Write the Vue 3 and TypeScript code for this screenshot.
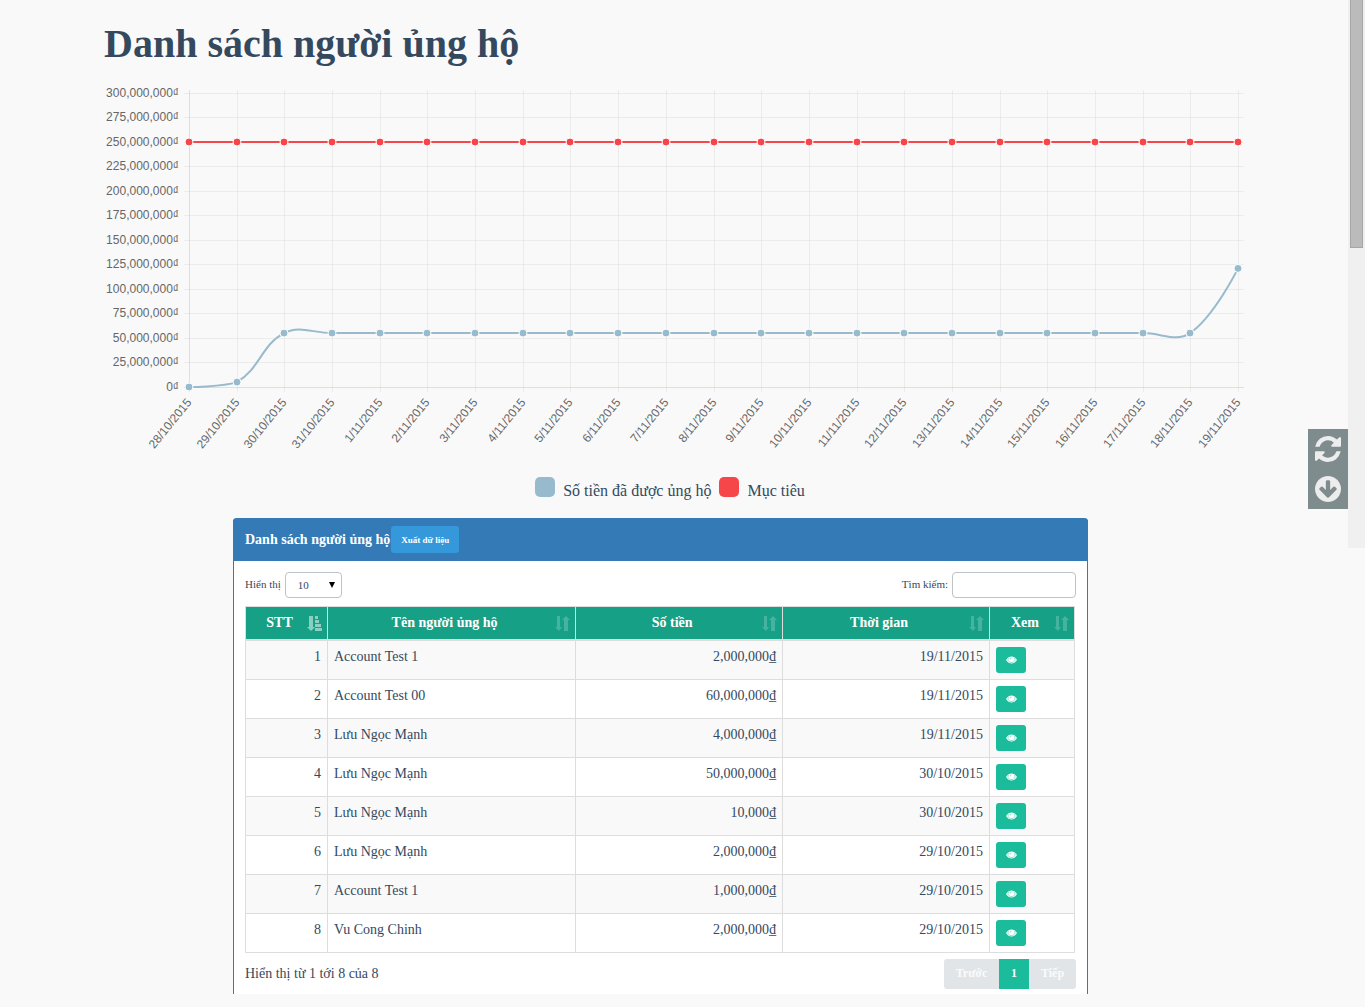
<script setup lang="ts">
import { ref } from 'vue'

interface Point { x: number; y: number }
interface Donor { name: string; amount: string; date: string }

const labels: string[] = [
  '28/10/2015', '29/10/2015', '30/10/2015', '31/10/2015',
  ...Array.from({ length: 19 }, (_, i) => `${i + 1}/11/2015`),
]

// Plot area inside the 1140 x 380 drawing
const left = 85
const right = 1134
const top = 5
const bottom = 299
const maxValue = 300

const xAt = (i: number): number => Math.round(left + (i * (right - left)) / (labels.length - 1))
const yAt = (millions: number): number => bottom - (millions * (bottom - top)) / maxValue

const ticks = Array.from({ length: 13 }, (_, i) => {
  const value = i * 25
  return { y: Math.round(yAt(value) - 0.1), text: value === 0 ? '0₫' : `${value},000,000₫` }
})

const raised: number[] = [0, 5, ...Array(20).fill(55), 121]
const raisedPoints: Point[] = raised.map((v, i) => ({ x: xAt(i), y: yAt(v) }))
const goalPoints: Point[] = labels.map((_, i) => ({ x: xAt(i), y: yAt(250) }))

// Smooth curve: every inner point gets a pair of handles kept inside the plot, the two ends get none
function curve(points: Point[], tension = 0.4): string {
  const inside = (y: number): number => Math.min(bottom, Math.max(top, y))
  const handles = points.map((p, i) => {
    const prev = points[i - 1]
    const next = points[i + 1]
    if (!prev || !next) return { before: p, after: p }
    const d1 = Math.hypot(p.x - prev.x, p.y - prev.y)
    const d2 = Math.hypot(next.x - p.x, next.y - p.y)
    const a = (tension * d1) / (d1 + d2)
    const b = (tension * d2) / (d1 + d2)
    return {
      before: { x: p.x - a * (next.x - prev.x), y: inside(p.y - a * (next.y - prev.y)) },
      after: { x: p.x + b * (next.x - prev.x), y: inside(p.y + b * (next.y - prev.y)) },
    }
  })
  return points
    .map((p, i) => {
      if (i === 0) return `M${p.x} ${p.y}`
      const c1 = handles[i - 1].after
      const c2 = handles[i].before
      return `C${c1.x} ${c1.y} ${c2.x} ${c2.y} ${p.x} ${p.y}`
    })
    .join('')
}

const series = [
  { name: 'Số tiền đã được ủng hộ', color: '#97bbcd', points: raisedPoints },
  { name: 'Mục tiêu', color: '#f7464a', points: goalPoints },
]

const columns = ['STT', 'Tên người ủng hộ', 'Số tiền', 'Thời gian', 'Xem']
const donors: Donor[] = [
  { name: 'Account Test 1', amount: '2,000,000₫', date: '19/11/2015' },
  { name: 'Account Test 00', amount: '60,000,000₫', date: '19/11/2015' },
  { name: 'Lưu Ngọc Mạnh', amount: '4,000,000₫', date: '19/11/2015' },
  { name: 'Lưu Ngọc Mạnh', amount: '50,000,000₫', date: '30/10/2015' },
  { name: 'Lưu Ngọc Mạnh', amount: '10,000₫', date: '30/10/2015' },
  { name: 'Lưu Ngọc Mạnh', amount: '2,000,000₫', date: '29/10/2015' },
  { name: 'Account Test 1', amount: '1,000,000₫', date: '29/10/2015' },
  { name: 'Vu Cong Chinh', amount: '2,000,000₫', date: '29/10/2015' },
]
const pageSize = ref('10')
const search = ref('')
</script>

<template>
  <div class="page">
    <main class="container">
      <h1>Danh sách người ủng hộ</h1>

      <svg class="chart" viewBox="0 0 1140 380" role="img" aria-label="Số tiền đã được ủng hộ">
        <g class="grid">
          <path v-for="(t, i) in ticks" :key="t.text" :class="{ axis: i === 0 }" :d="`M80 ${t.y + 0.5}H1140`" />
          <path v-for="(l, i) in labels" :key="l" :class="{ axis: i === 0 }" :d="`M${xAt(i) + 0.5} 2V304`" />
        </g>
        <g class="labels">
          <text v-for="t in ticks" :key="t.text" x="75" :y="t.y + 4">{{ t.text }}</text>
          <text v-for="(l, i) in labels" :key="l" y="4" :transform="`translate(${xAt(i)} 312) rotate(-51)`">{{ l }}</text>
        </g>
        <g v-for="s in series" :key="s.name">
          <path :d="curve(s.points)" fill="none" :stroke="s.color" stroke-width="2" />
          <circle v-for="p in s.points" :key="p.x" :cx="p.x" :cy="p.y" r="4" :fill="s.color" stroke="#fff" />
        </g>
      </svg>

      <ul class="legend">
        <li v-for="s in series" :key="s.name">
          <span class="swatch" :style="{ background: s.color }"></span>{{ s.name }}
        </li>
      </ul>

      <section class="panel">
        <header class="panel-head">
          <h2>Danh sách người ủng hộ</h2>
          <button type="button" class="export">Xuất dữ liệu</button>
        </header>
        <div class="panel-body">
          <div class="tools">
            <div class="field">
              <label for="size">Hiển thị</label>
              <span class="select">
                <select id="size" v-model="pageSize">
                  <option>10</option>
                  <option>25</option>
                  <option>50</option>
                </select>
                <svg viewBox="0 0 6 6" aria-hidden="true"><path d="M0 0h6L3 6z" /></svg>
              </span>
            </div>
            <div class="field">
              <label for="search">Tìm kiếm:</label>
              <input id="search" v-model="search" type="search" />
            </div>
          </div>

          <table>
            <colgroup>
              <col class="c-no" /><col class="c-name" /><col class="c-sum" /><col class="c-date" /><col class="c-view" />
            </colgroup>
            <thead>
              <tr>
                <th v-for="(c, i) in columns" :key="c" scope="col">
                  <div class="th">
                    <span>{{ c }}</span>
                    <svg v-if="i === 0" class="sort on" viewBox="0 0 15 15" aria-hidden="true">
                      <path d="M2 0h4v11h2l-4 4-4-4h2zM8 0h3v3H8zM8 4h4v3H8zM8 8h6v3H8zM8 12h7v3H8z" />
                    </svg>
                    <svg v-else class="sort" viewBox="0 0 15 15" aria-hidden="true">
                      <path d="M2 0h3v11h2l-3 4-4-4h2zM9 15h4V4h2l-4-4-4 4h2z" />
                    </svg>
                  </div>
                </th>
              </tr>
            </thead>
            <tbody>
              <tr v-for="(d, i) in donors" :key="i">
                <td class="num">{{ i + 1 }}</td>
                <td>{{ d.name }}</td>
                <td class="num">{{ d.amount }}</td>
                <td class="num">{{ d.date }}</td>
                <td>
                  <button type="button" class="view" aria-label="Xem">
                    <svg viewBox="0 0 22 16" aria-hidden="true">
                      <path d="M0 8C3 3 7 1 11 1s8 2 11 7c-3 5-7 7-11 7S3 13 0 8z" />
                      <path class="ring" d="M5 4C2 9 6 13 11 13s9-4 6-9" />
                      <path class="ring" d="M8 7c0-2 1-3 3-3" />
                    </svg>
                  </button>
                </td>
              </tr>
            </tbody>
          </table>

          <div class="foot">
            <p>Hiển thị từ 1 tới 8 của 8</p>
            <nav class="pager">
              <a href="#" class="prev">Trước</a>
              <a href="#" class="current" aria-current="page">1</a>
              <a href="#" class="next">Tiếp</a>
            </nav>
          </div>
        </div>
      </section>
    </main>

    <div class="track" aria-hidden="true"><div class="thumb"></div></div>

    <div class="float">
      <button type="button" aria-label="Tải lại">
        <svg viewBox="0 0 1536 1536" aria-hidden="true">
          <path d="M1511 928q0 5-1 7-64 268-268 434.500T764 1536q-146 0-282.500-55T238 1324l-129 129q-19 19-45 19t-45-19-19-45V960q0-26 19-45t45-19h448q26 0 45 19t19 45-19 45l-137 137q71 66 161 102t187 36q134 0 250-65t186-179q11-17 53-117 8-23 30-23h192q13 0 22.500 9.500t9.500 22.500zm25-800v448q0 26-19 45t-45 19h-448q-26 0-45-19t-19-45 19-45l138-138Q969 256 768 256q-134 0-250 65T332 500q-11 17-53 117-8 23-30 23H50q-13 0-22.500-9.500T18 608v-7q65-268 270-434.500T768 0q146 0 284 55.500T1297 212l130-129q19-19 45-19t45 19 19 45z" />
        </svg>
      </button>
      <button type="button" aria-label="Xuống cuối trang">
        <svg viewBox="0 0 1536 1536" aria-hidden="true">
          <path d="M1284 769q0-27-18-45l-91-91q-18-18-45-18t-45 18L896 822V320q0-26-19-45t-45-19H704q-26 0-45 19t-19 45v502L451 633q-19-19-45-19t-45 19l-91 91q-18 18-18 45t18 45l362 362 91 91q18 18 45 18t45-18l91-91 362-362q18-18 18-45zm252-1q0 209-103 385.500T1153.500 1433 768 1536t-385.500-103T103 1153.500 0 768t103-385.500T382.500 103 768 0t385.500 103T1433 382.500 1536 768z" />
        </svg>
      </button>
    </div>
  </div>
</template>

<style>
body {
  background: #f9f9f9;
}
</style>

<style scoped>
.page {
  --ink: #34495e;
  box-sizing: border-box;
  padding-right: 17px;
  padding-bottom: 13px;
  font: 14px/20px "Liberation Serif", "Times New Roman", serif;
  color: var(--ink);
}
.page *, .page *::before {
  box-sizing: border-box;
}
.container {
  max-width: 1140px;
  margin: 0 auto;
}
h1 {
  margin: 0;
  padding: 22px 0;
  font-size: 40px;
  line-height: 44px;
}
.chart {
  display: block;
  width: 100%;
  overflow: visible;
}
.grid path {
  stroke: rgba(0, 0, 0, 0.05);
}
.grid .axis {
  stroke: rgba(0, 0, 0, 0.1);
}
.labels text {
  font: 12px "Liberation Sans", Arial, sans-serif;
  fill: #666;
  text-anchor: end;
}
.legend {
  display: flex;
  justify-content: center;
  gap: 8px;
  margin: 0;
  padding: 9px 8px 13px 0;
  list-style: none;
  font-size: 16px;
  line-height: 28px;
}
.legend li {
  display: flex;
  gap: 8px;
}
.legend .swatch {
  width: 20px;
  height: 20px;
  border-radius: 5px;
}
.panel {
  width: 75%;
  margin-left: 129px;
  border: solid #337ab7;
  border-width: 0 1px;
  border-radius: 4px 4px 0 0;
  background: #fff;
}
.panel-head {
  display: flex;
  align-items: center;
  gap: 1px;
  height: 43px;
  margin: 0 -1px;
  padding: 0 12px;
  border-radius: 4px 4px 0 0;
  background: #337ab7;
  color: #fff;
}
h2 {
  margin: 0;
  font-size: 14px;
  line-height: 20px;
}
button {
  border: 0;
  font-family: inherit;
  color: #fff;
  cursor: pointer;
}
.export {
  height: 27px;
  padding: 0 10px;
  border-radius: 3px;
  background: #3498db;
  font-size: 9px;
  font-weight: bold;
}
.panel-body {
  padding: 11px 11px 5px;
}
.tools, .foot {
  display: flex;
  justify-content: space-between;
}
.field {
  display: flex;
  gap: 4px;
  font-size: 11px;
  line-height: 25px;
}
.select {
  position: relative;
}
select, input {
  display: block;
  height: 26px;
  border: 1px solid #bdc3c7;
  border-radius: 4px;
  background: #fff;
  font: 11px "Liberation Serif", "Times New Roman", serif;
  color: var(--ink);
}
select {
  width: 57px;
  padding: 0 12px;
  appearance: none;
}
.select svg {
  position: absolute;
  top: 10px;
  right: 7px;
  width: 6px;
  height: 6px;
  pointer-events: none;
}
input {
  width: 124px;
  padding: 0 8px;
}
table {
  width: calc(100% - 1px);
  margin-top: 8px;
  border-collapse: collapse;
  table-layout: fixed;
}
.c-no { width: 82px; }
.c-name { width: 30%; }
.c-sum, .c-date { width: 25%; }
.c-view { width: 85px; }
th, td {
  border: 1px solid #ddd;
  padding: 6px;
  text-align: left;
  vertical-align: top;
}
th {
  border-bottom-width: 2px;
  padding-right: 5px;
  background: #16a085;
  color: #fff;
}
.th {
  display: flex;
  align-items: center;
}
.th span {
  flex: 1;
  text-align: center;
}
.sort {
  width: 15px;
  height: 15px;
  fill: #fff;
  opacity: 0.2;
}
.sort.on {
  opacity: 0.5;
}
.num {
  text-align: right;
}
tbody tr:nth-child(odd) {
  background: #f9f9f9;
}
.view {
  display: flex;
  align-items: center;
  justify-content: center;
  width: 30px;
  height: 26px;
  padding: 0;
  border-radius: 3px;
  background: #1abc9c;
}
.view svg {
  width: 11px;
  height: 8px;
  fill: #fff;
}
.view .ring {
  fill: none;
  stroke: #1abc9c;
  stroke-width: 1;
}
.foot {
  padding-top: 6px;
}
.foot p {
  margin: 0;
  line-height: 30px;
}
.pager {
  display: flex;
  font-size: 12px;
  font-weight: bold;
  line-height: 28px;
  text-align: center;
}
.pager a {
  height: 30px;
  background: #e1e5e8;
  color: #fbfbfb;
  text-decoration: none;
}
.pager .prev {
  width: 55px;
  border-radius: 3px 0 0 3px;
}
.pager .current {
  width: 30px;
  background: #1abc9c;
}
.pager .next {
  width: 47px;
  border-radius: 0 3px 3px 0;
}
.track {
  position: absolute;
  top: 0;
  right: 0;
  width: 17px;
  height: 548px;
  background: #f0f0f0;
}
.thumb {
  width: 13px;
  height: 248px;
  margin: 0 auto;
  border: solid #a6a6a6;
  border-width: 0 1px 1px;
  background: #bbb;
}
.float {
  position: absolute;
  top: 429px;
  right: 17px;
  background: #7f8c8d;
}
.float button {
  display: block;
  width: 40px;
  height: 40px;
  padding: 7px;
  background: none;
}
.float svg {
  display: block;
  width: 26px;
  height: 26px;
  fill: #ededed;
}
</style>
